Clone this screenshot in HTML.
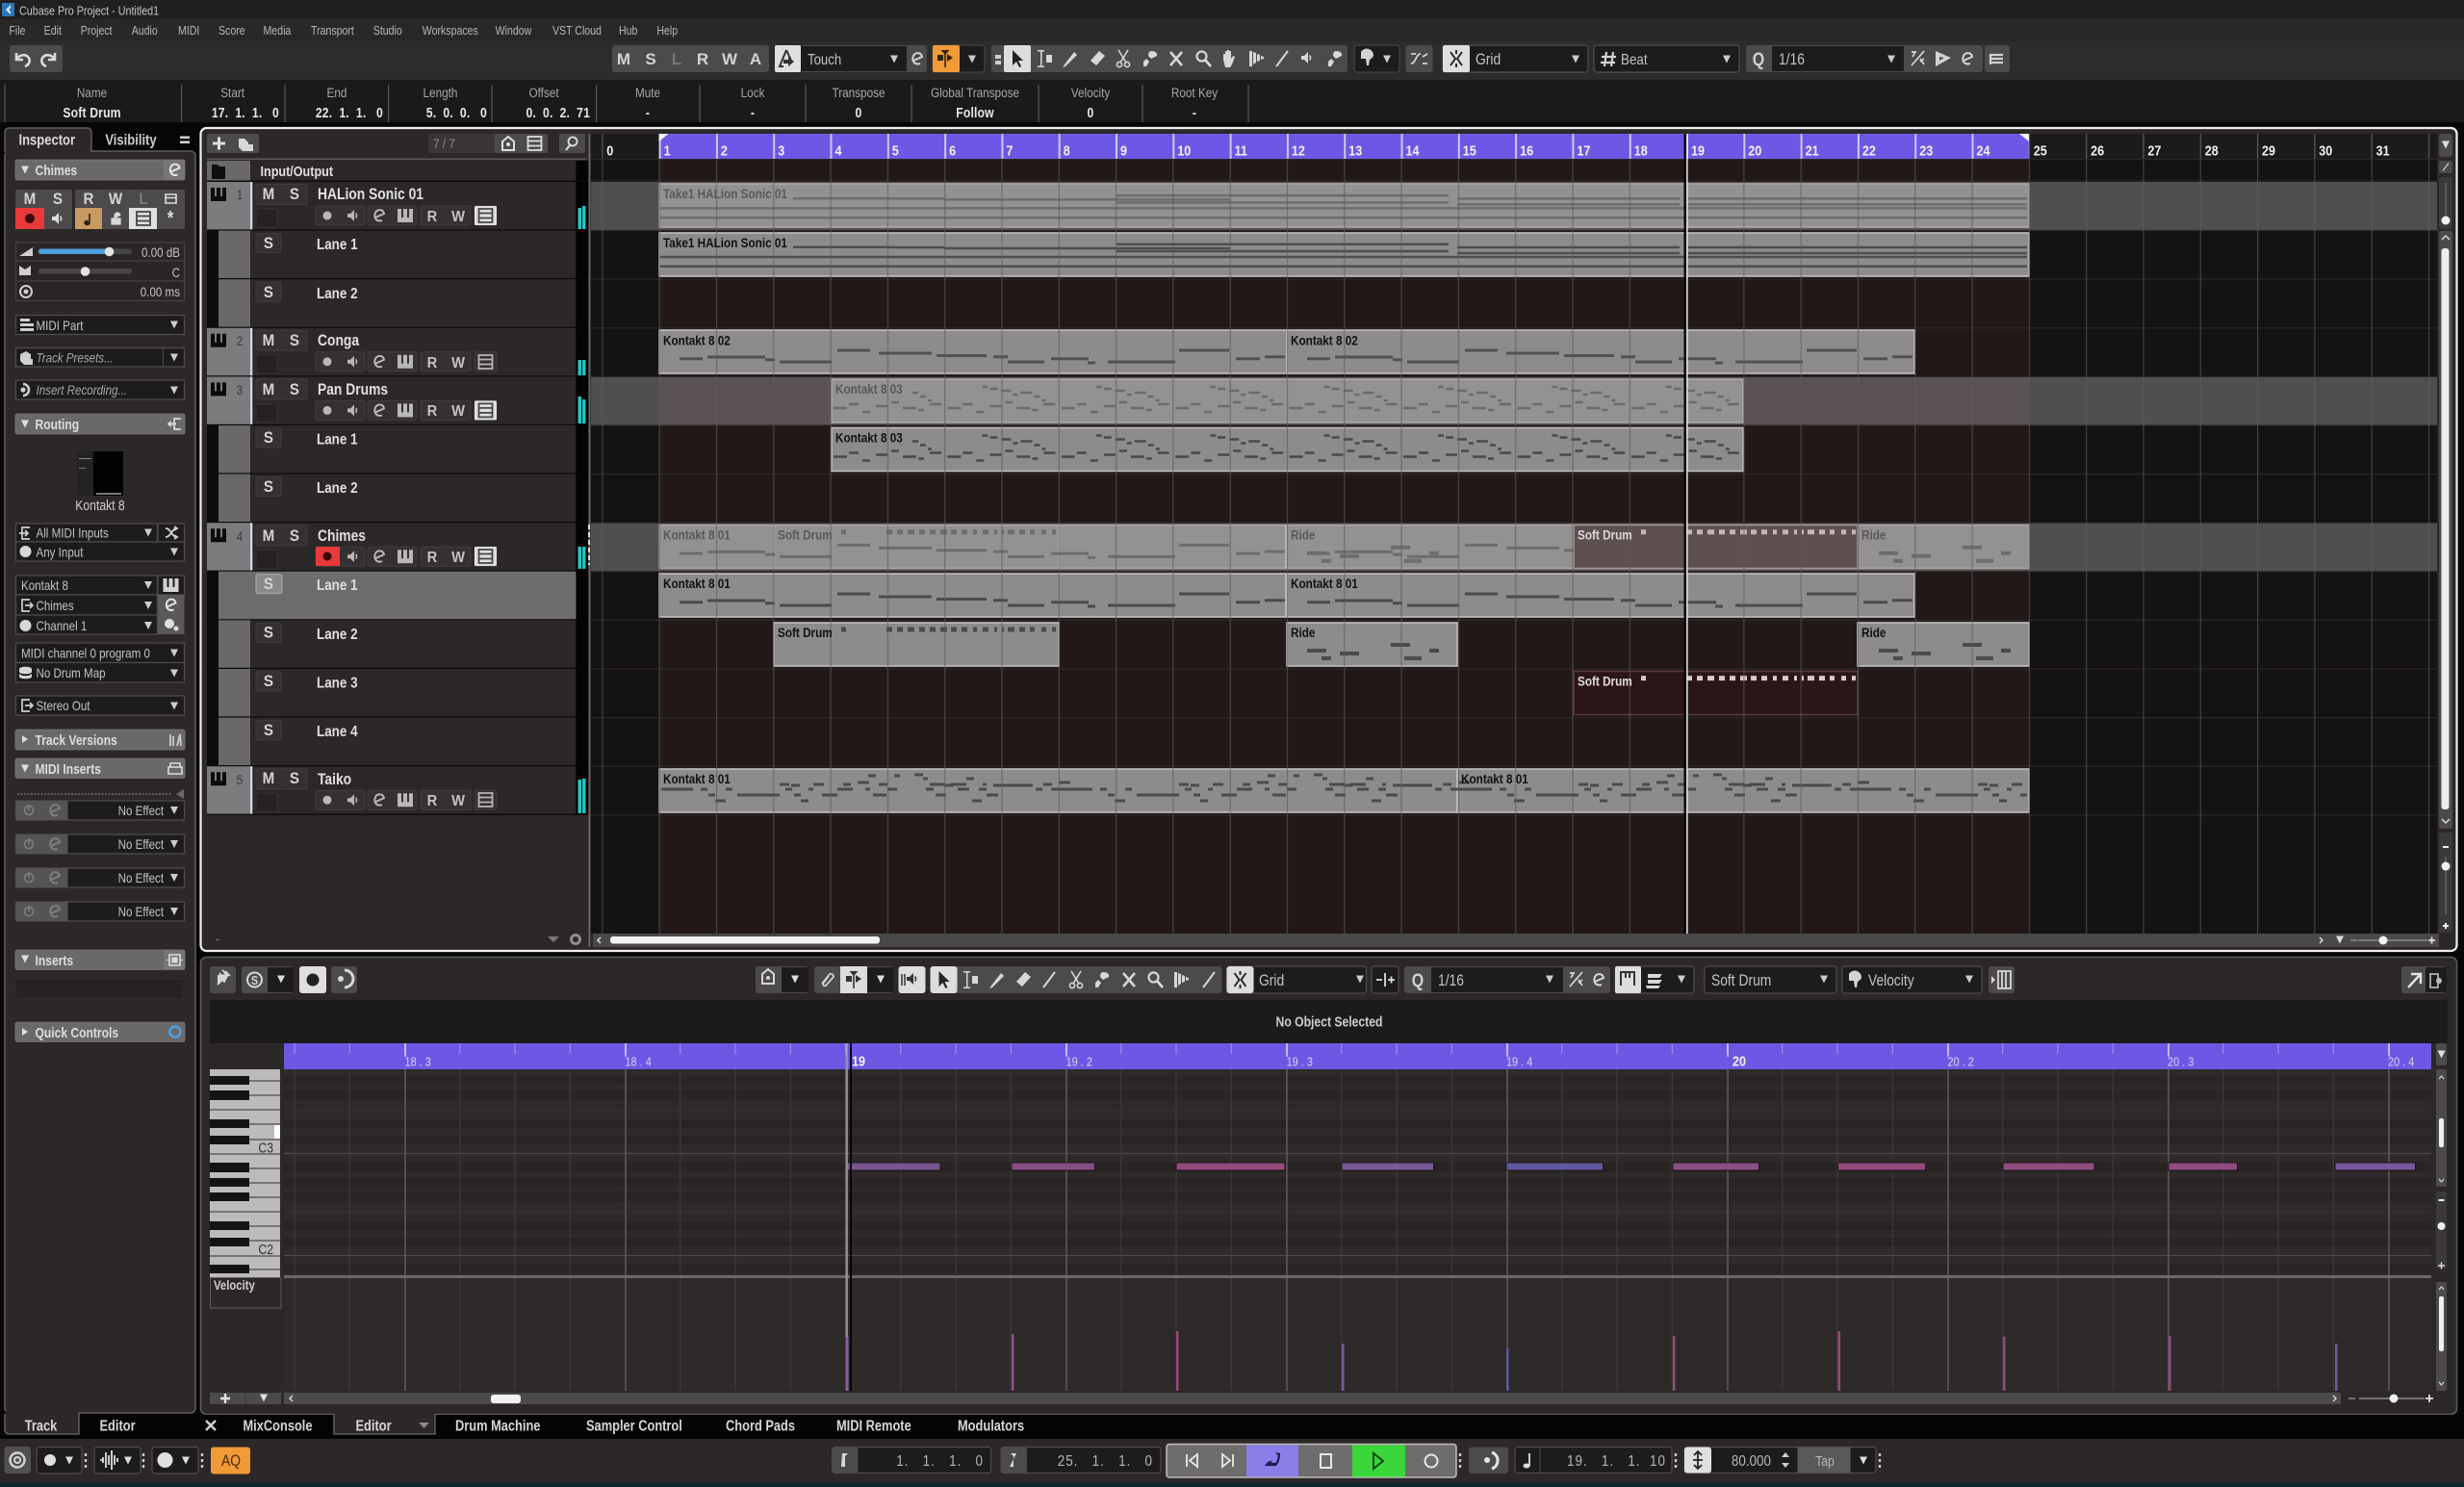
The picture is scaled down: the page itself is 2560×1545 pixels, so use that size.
<!DOCTYPE html>
<html><head><meta charset="utf-8"><title>Cubase Pro Project - Untitled1</title>
<style>
html,body{margin:0;padding:0;background:#080707;width:2560px;height:1545px;overflow:hidden}
svg{display:block}
text{font-family:"Liberation Sans",sans-serif;fill:#d4d2d2;font-size:13.5px;transform-box:fill-box;transform-origin:0 50%;transform:scaleX(.84);white-space:pre}
.c{text-anchor:middle;transform-origin:50% 50%}
.r{text-anchor:end;transform-origin:100% 50%}
.b{font-weight:700}
.bt{font-weight:700;font-size:16.5px;text-anchor:middle;transform-origin:50% 50%;transform:scaleX(.92)}
.bs{font-weight:700;font-size:16px;fill:#c4c2c2;text-anchor:middle;transform-origin:50% 50%;transform:scaleX(.92)}
.tl{font-weight:700;font-size:17px;text-anchor:middle;transform-origin:50% 50%;transform:scaleX(1)}
.m{font-size:12.6px;fill:#b8b6b6}
.l{fill:#a8a6a6;font-size:14px}
.v{font-weight:700;font-size:14.5px;fill:#e8e6e6;letter-spacing:.2px}
.tb{font-weight:700;font-size:15.5px;fill:#dcdada}
.n{font-weight:700;font-size:16.5px;fill:#e0dede}
.h{font-weight:700;font-size:14.4px;fill:#dedcdc}
.i{font-size:13.8px;fill:#c4c2c2}
.dt{font-size:16.5px;fill:#c4c2c2}
.e{font-weight:700;font-size:14px;fill:#111}
.ed{font-weight:700;font-size:14px;fill:#5a5858}
.bar{font-weight:700;font-size:15px;fill:#f2f2f2}
.beat{font-size:13px;fill:#d8d4f4}
.tab{font-weight:700;font-size:15.3px;fill:#d8d6d6}
.tr{font-size:16px;fill:#b8b6b6;letter-spacing:1.2px}
.dd{fill:#1e1b1b;stroke:#4e4c4c;stroke-width:1.2}
.g{fill:#4c4a4a}
.hd{fill:#6a6868;stroke:#7a7878;stroke-width:.8}
.ev{stroke:#c2c0c0;stroke-width:1.6;fill:#8d8b8b}
.et{stroke:#aaa8a8;stroke-width:1.6;fill:#939191}
</style></head><body>
<svg width="2560" height="1545" viewBox="0 0 2560 1545">
<defs>
<pattern id="pb" patternUnits="userSpaceOnUse" x="625.3" y="0" width="59.3" height="10"><rect width="1.2" height="10" fill="#5c5a5a"/></pattern>
<pattern id="pr" patternUnits="userSpaceOnUse" x="625.3" y="0" width="59.3" height="10"><rect width="2" height="10" fill="#cdc8f4"/></pattern>
<pattern id="pe" patternUnits="userSpaceOnUse" x="305.5" y="0" width="57.25" height="10"><rect width="1" height="10" fill="#403d3d"/></pattern>
<pattern id="pE" patternUnits="userSpaceOnUse" x="420.5" y="0" width="229" height="10"><rect width="1.2" height="10" fill="#625f5f"/></pattern>
<pattern id="pt" patternUnits="userSpaceOnUse" x="305.5" y="0" width="57.25" height="10"><rect width="1" height="10" fill="#a398ec"/></pattern>
<pattern id="pT" patternUnits="userSpaceOnUse" x="420.5" y="0" width="229" height="10"><rect width="1.2" height="10" fill="#e4e0fa"/></pattern>
<clipPath id="tk"><rect x="1514" y="798" width="592" height="46"/></clipPath>
<clipPath id="a1"><rect x="684" y="600" width="951" height="40"/></clipPath>
<clipPath id="a2"><rect x="684" y="600" width="299" height="40"/></clipPath>
<clipPath id="pc"><path d="M0 17h84v-17h200v50h-284z"/></clipPath>
<path id="tri" d="M-4-3.5h8l-4 8z"/>
<path id="keys" d="M-8-7h4v14h-4zM-2-7h4v14h-4zM4-7h4v14h-4zM-8 2h16v5h-16z"/>
<path id="e" fill="none" stroke-width="2" d="M-4 2L5-2C4-7-2-7-4-3C-6 2-3 7 3 5"/>
<path id="spk" stroke="none" d="M-6-2h3l4-4v12l-4-4h-3zM3-3a4 4 0 0 1 0 6l-1-1a3 3 0 0 0 0-4z"/>
<path id="list" fill="none" stroke-width="1.8" d="M-7-7h14v14h-14zM-7-2.5h14M-7 2.5h14"/>
<path id="t-i" stroke="none" d="M-7-9h7v1.5h-2.5v15h2.5v1.5h-7v-1.5h3v-15h-3zM2-4h6v8h-6z"/>
<path id="t-pen" stroke="none" d="M-6 6l-2 3 3-1L7-4 4-7z"/>
<path id="t-era" stroke="none" d="M-7 2L2-8l6 5-9 10z"/>
<g id="t-sci"><circle cx="-4" cy="6" r="2.6" fill="none" stroke-width="1.6"/><circle cx="4" cy="6" r="2.6" fill="none" stroke-width="1.6"/><path fill="none" stroke-width="1.6" d="M-3 4L5-9M3 4L-5-9"/></g>
<path id="t-glue" stroke="none" d="M1-8c4 0 7 2 6 5L1 0l-3-3c0-3 1-5 3-5zM-7 3l3-3 3 3-3 5h-3z"/>
<path id="t-x" fill="none" stroke-width="2.6" d="M-6-7L6 7M6-7L-6 7"/>
<g id="t-zoom"><circle cx="-1.5" cy="-2.5" r="5" fill="none" stroke-width="2.2"/><path fill="none" stroke-width="2.8" d="M2 1l6 7"/></g>
<path id="t-hand" stroke="none" d="M-6 1v-6h2v4-7h2v7-8h2v8-7h2v8l2-3 2 1-3 8-2 3h-5z"/>
<path id="t-mute" stroke="none" d="M-7-8h3v16h-3zM-3-7l3 1v10l-3 2zM1-5l3 1v6l-3 1zM5-3l3 1v2l-3 1z"/>
<path id="t-line" fill="none" stroke-width="2" d="M-6 8L6-8"/>
<path id="arrow" stroke="none" d="M-5-9V7l4-4 3 6 2-1-3-6h5z"/>
<path id="snap" stroke="none" d="M-4.500-8h9L0-3zM-.8-4h1.600v14h-1.600zM-8-3h6v6h-6zM2-4l6 4-6 4z"/>
<path id="grid" fill="none" stroke-width="1.9" d="M-6-7L-1 0-6 7M6-7L1 0 6 7M0-9v4M0 5v4"/>
<g id="trk">
<rect x="215" y="0" width="45" height="49.4" fill="#7d7b7b"/><rect x="260" y="0" width="2.4" height="49.4" fill="#c9dae8"/><rect x="262.400" y="0" width="336" height="49.4" fill="#2c2828"/><rect x="598.400" y="0" width="13" height="50" fill="#050404"/>
<rect x="266" y="2.500" width="53" height="21" rx="2" fill="#353131" stroke="#403d3d"/>
<rect x="266" y="28" width="22" height="19" fill="#262222" stroke="#353131"/>
<rect x="328" y="25" width="51" height="20" rx="2" fill="#353131" stroke="#403d3d"/><rect x="382" y="25" width="51" height="20" rx="2" fill="#353131" stroke="#403d3d"/><rect x="437" y="25" width="52" height="20" rx="2" fill="#353131" stroke="#403d3d"/><rect x="493" y="25" width="23" height="20" rx="2" fill="#353131" stroke="#403d3d"/>
<circle cx="340" cy="35" r="4.500" fill="#b8b6b6"/><use href="#spk" x="367" y="35" fill="#b8b6b6"/><use href="#e" x="394" y="35" stroke="#b8b6b6"/><use href="#keys" x="421" y="35" fill="#b8b6b6"/>
<use href="#keys" x="227" y="13" fill="#0d0c0c"/>
</g>
<g id="lane"><rect x="215" y="0" width="12" height="49.4" fill="#0d0c0c"/><rect x="227" y="0" width="33" height="49.4" fill="#6a6868"/><rect x="260" y="0" width="338.4" height="49.4" fill="#2c2828"/><rect x="598.400" y="0" width="13" height="50" fill="#050404"/><rect x="266" y="3" width="26" height="20" rx="2" fill="#353131" stroke="#403d3d"/></g>
<path id="k" fill="none" stroke-width="3" d="M706 625.700h24M735 624h60M795 626.700h10M810 629h54M870 617h34M913 620h55M973 622.500h52M1032 623.700h15M1047 629h38M1092 625.700h39M1130 630h8M1151 629h70M1225 617h52M1284 625.700h25M1314 623.700h21"/>
<path id="sd" fill="none" stroke-width="5" d="M874 654h5M921 654h6M932 654h6M943 654h7M955 654h6M966 654h6M977 654h7M988 654h6M999 654h6M1011 654h4M1021 654h6M1033 654h3M1041 654h2M1047 654h7M1059 654h6M1070 654h5M1082 654h5M1093 654h4"/>
<path id="rd" fill="none" stroke-width="4" d="M1358 676h20M1373 684h10M1392 679h20M1445 670h20M1459 684h18M1485 676h10"/>
<path id="hl" fill="none" stroke-width="2.500" d="M824 256.700h100M924 257h57M981 258h179M686 267h1420M686 276.700h1420M1160 253.700h345M1160 258h118M1160 261h345M1514 257h231M1514 263h231M1754 257h352M1754 263h352"/>
<path id="pd" fill="none" stroke-width="2.500" d="M38 8h6M46 10h8M58 12h10M70 16h5M78 14h12M92 18h6M100 22h4M2 30h14M18 26h10M32 34h8M46 28h12M62 24h8M74 30h14M90 32h6M102 26h12"/>
<path id="tko" fill="none" stroke-width="3" d="M687 820h33M728 820h7M736 826h7M743 832h11M754 820h7M766 826h44M810 815h10M816 820h7M822 816h9M825 826h7M832 832h8M840 820h5M845 815h11M854 826h16M870 820h16M876 815h8M891 813h12M902 806h8M899 820h5M907 826h14M913 815h9M922 820h10M929 806h6M950 805h9M959 809h5M966 815h16M962 820h8M972 826h11M981 816h9M988 815h16M995 820h12M1004 809h8M1010 832h10M1017 820h8M1021 815h4M1025 826h12M1032 816h41M1076 820h7M1084 815h9M1092 820h10M1100 813h12"/>
</defs>

<!-- title / menu / toolbar / info -->
<rect width="2560" height="20" fill="#1e2120"/>
<rect x="2" y="3" width="13" height="14" rx="1" fill="#2c78b8"/><path d="M11 5L6 10l5 5v-3L9 10l2-2z" fill="#e8f0f8"/>
<text x="20" y="15.500" style="font-size:12.800px;fill:#c4c4c4">Cubase Pro Project - Untitled1</text>
<rect y="20" width="2560" height="23" fill="#2a2727"/>
<rect y="43" width="2560" height="40" fill="#2e2b2b"/>
<rect y="83" width="2560" height="44" fill="#1b1919"/>
<text class="m" x="9.400" y="36">File</text><text class="m" x="45.700" y="36">Edit</text><text class="m" x="83.700" y="36">Project</text><text class="m" x="136.700" y="36">Audio</text><text class="m" x="185" y="36">MIDI</text><text class="m" x="227" y="36">Score</text><text class="m" x="273.500" y="36">Media</text><text class="m" x="323" y="36">Transport</text><text class="m" x="387.800" y="36">Studio</text><text class="m" x="438.800" y="36">Workspaces</text><text class="m" x="514.700" y="36">Window</text><text class="m" x="574" y="36">VST Cloud</text><text class="m" x="643" y="36">Hub</text><text class="m" x="682.400" y="36">Help</text>

<rect x="10" y="47" width="55" height="28" rx="3" class="g"/>
<path d="M17 55v7h7M18 61c2-4 8-5 11-2 3 3 2 8-3 10" fill="none" stroke="#dcdada" stroke-width="2.600"/>
<path d="M57 55v7h-7M56 61c-2-4-8-5-11-2-3 3-2 8 3 10" fill="none" stroke="#dcdada" stroke-width="2.600"/>

<rect x="636" y="47" width="163" height="28" rx="3" class="g"/>
<text class="tl" x="648" y="67">M</text><text class="tl" x="676" y="67">S</text><text class="tl" x="703" y="67" style="fill:#7a7878">L</text><text class="tl" x="730" y="67">R</text><text class="tl" x="758" y="67">W</text><text class="tl" x="785" y="67">A</text>
<rect x="805" y="47" width="158" height="28" rx="3" class="g"/><rect x="805" y="47" width="27" height="28" rx="2" fill="#e0dede"/><path d="M817 52l-7 17h4M817 52l6 13" fill="none" stroke="#333" stroke-width="2"/><path d="M814 62h5v-3l6 5-6 5v-3h-5z" fill="#333"/>
<rect x="832" y="48" width="110" height="26" fill="#1e1b1b"/><text class="dt" x="839" y="67" style="font-size:15.700px">Touch</text><use href="#tri" x="929" y="61" fill="#ccc"/><use href="#e" x="953" y="61" stroke="#d4d2d2"/>
<rect x="969" y="47" width="54" height="28" rx="3" fill="#1e1b1b" stroke="#4c4a4a"/><rect x="969" y="47" width="28" height="28" rx="2" fill="#f09a38"/><use href="#snap" x="982" y="60" fill="#332211"/><use href="#tri" x="1010" y="61" fill="#ccc"/>
<rect x="1030" y="47" width="370" height="28" rx="3" class="g"/><path d="M1034 57h6v4h-6zM1034 63h6v4h-6z" fill="#d0cece"/>
<rect x="1043" y="47" width="28" height="28" rx="2" fill="#dedcdc"/><use href="#arrow" x="1057" y="61" fill="#222"/>
<g fill="#d8d6d6" stroke="#d8d6d6"><use href="#t-i" x="1085" y="61"/><use href="#t-pen" x="1112" y="61"/><use href="#t-era" x="1140" y="61"/><use href="#t-sci" x="1167" y="61"/><use href="#t-glue" x="1195" y="61"/><use href="#t-x" x="1222" y="61"/><use href="#t-zoom" x="1250" y="61"/><use href="#t-hand" x="1277" y="61"/><use href="#t-mute" x="1305" y="61"/><use href="#t-line" x="1332" y="61"/><use href="#spk" x="1358" y="60"/><use href="#t-glue" x="1387" y="61"/></g>
<rect x="1407" y="47" width="47" height="28" rx="3" fill="#1e1b1b" stroke="#4c4a4a"/><path d="M1414 54a7 7 0 0 1 13 3c0 3-3 4-4 5l-1 6h-2l-1-7h-5z" fill="#d4d2d2"/><use href="#tri" x="1441" y="61" fill="#ccc"/>
<rect x="1460.500" y="47" width="28" height="28" rx="3" class="g"/><path d="M1466 66c5 0 5-10 10-10M1466 56h5M1478 66h5M1478 59l5-3" fill="none" stroke="#d4d2d2" stroke-width="1.800"/>
<rect x="1499" y="47" width="151" height="28" rx="3" class="dd"/><rect x="1499" y="47" width="28" height="28" rx="2" fill="#e0dede"/><use href="#grid" x="1513" y="61" stroke="#222"/><text class="dt" x="1533" y="67">Grid</text><use href="#tri" x="1637" y="61" fill="#ccc"/>
<rect x="1656" y="47" width="151" height="28" rx="3" class="dd"/><path d="M1669 54l-2 15M1676 54l-2 15M1664 59h15M1663 65h15" stroke="#d4d2d2" stroke-width="2.200"/><text class="dt" x="1684" y="67" style="font-size:16px">Beat</text><use href="#tri" x="1794" y="61" fill="#ccc"/>
<rect x="1814" y="47" width="246" height="28" rx="3" class="g"/><text class="c b" x="1827" y="68" style="font-size:19px">Q</text><rect x="1841" y="48" width="137" height="26" fill="#1e1b1b"/><text class="dt" x="1848" y="67">1/16</text><use href="#tri" x="1965" y="61" fill="#ccc"/>
<path d="M1986 68l13-15M1986 54h4l-3 5M1995 61l4 6M1999 61l-4 3" fill="none" stroke="#d8d6d6" stroke-width="1.700"/><path d="M2011 53v16l16-9zM2015 59l5 1-5 3z" fill="#d4d2d2" fill-rule="evenodd"/><use href="#e" x="2044" y="61" stroke="#d4d2d2"/>
<rect x="2062" y="47" width="26" height="28" rx="3" class="g"/><path d="M2068 56v11M2068 57h13M2068 61h13M2068 65h13" stroke="#d4d2d2" stroke-width="2.200"/>

<path d="M5 88v39M188.600 88v39M296 88v39M403.600 88v39M511 88v39M619.600 88v39M727 88v39M837 88v39M947 88v39M1079 88v39M1187 88v39M1297 88v39" stroke="#555353" stroke-width="1.300"/>
<text class="c l" x="95.500" y="101">Name</text><text class="c l" x="241.600" y="101">Start</text><text class="c l" x="350" y="101">End</text><text class="c l" x="457.500" y="101">Length</text><text class="c l" x="565" y="101">Offset</text><text class="c l" x="673" y="101">Mute</text><text class="c l" x="782" y="101">Lock</text><text class="c l" x="892" y="101">Transpose</text><text class="c l" x="1013" y="101">Global Transpose</text><text class="c l" x="1133" y="101">Velocity</text><text class="c l" x="1241" y="101">Root Key</text>
<text class="c v" x="95.500" y="122">Soft Drum</text><text class="r v" x="290" y="122">17.  1.  1.   0</text><text class="r v" x="398" y="122">22.  1.  1.   0</text><text class="r v" x="506" y="122">5.  0.  0.   0</text><text class="r v" x="613" y="122">0.  0.  2.  71</text><text class="c v" x="673" y="122">-</text><text class="c v" x="782" y="122">-</text><text class="c v" x="892" y="122">0</text><text class="c v" x="1013" y="122">Follow</text><text class="c v" x="1133" y="122">0</text><text class="c v" x="1241" y="122">-</text>

<!-- inspector -->
<rect x="5" y="157" width="198" height="1311" rx="5" fill="#2c2828" stroke="#5c5a5a" stroke-width="1.600"/>
<path d="M5 157v-19q0-5 5-5h80q5 0 5 5v19z" fill="#2c2828" stroke="#5c5a5a" stroke-width="1.500"/><rect x="6" y="155" width="88" height="5" fill="#2c2828"/>
<text class="tb" x="19.500" y="150.500">Inspector</text><text class="c tb" x="136" y="150.500" style="fill:#cfcdcd">Visibility</text><path d="M187 141.500h10v2.500h-10zM187 146.500h10v2.500h-10z" fill="#d4d2d2"/>
<rect x="16" y="166" width="176" height="21" rx="2" class="hd"/><rect x="170" y="166" width="22" height="21" fill="#777575"/><use href="#tri" x="26" y="176" fill="#ddd"/><text class="h" x="36.500" y="182">Chimes</text><use href="#e" x="181.500" y="176.500" stroke="#e4e4e4"/>
<rect x="16" y="197" width="59" height="41" rx="2" class="g"/><rect x="78" y="197" width="114" height="41" rx="2" class="g"/>
<rect x="16" y="216" width="30" height="22" fill="#e83a3a"/><circle cx="31" cy="227" r="5" fill="#3a0a0a"/><use href="#spk" x="60" y="227" fill="#ddd"/>
<rect x="78" y="216" width="28" height="22" fill="#c89a62"/><path d="M93 222v9M93 231a2.500 2 0 1 1-2-1.500" fill="#2a1e10" stroke="#2a1e10" stroke-width="1.600"/>
<path d="M116 232v-6h9v6zM119 226v-3a3 3 0 0 1 6 0" fill="#d8d8d8" stroke="#d8d8d8" stroke-width="1.200" transform="translate(0 1)"/>
<rect x="134" y="216" width="29" height="22" fill="#e0dede"/><use href="#list" x="149" y="227" stroke="#444"/><text class="c b" x="177" y="233" style="font-size:20px;fill:#ddd">*</text>
<text class="bt" x="31" y="212">M</text><text class="bt" x="60" y="212">S</text><text class="bt" x="92" y="212">R</text><text class="bt" x="120" y="212">W</text><text class="bt" x="149" y="212" style="fill:#7e7c7c">L</text><path d="M172 202h11v9h-11zM172 205.500h11" fill="none" stroke="#ddd" stroke-width="1.600"/>
<rect x="16.500" y="252" width="175" height="19" fill="#2a2626" stroke="#484646"/><rect x="16.500" y="271" width="175" height="21" fill="#2a2626" stroke="#484646"/><rect x="16.500" y="292" width="175" height="20.500" fill="#2a2626" stroke="#484646"/>
<path d="M20 266l14-9v9z" fill="#d0cece"/><rect x="40" y="258.500" width="97" height="5.500" rx="2.500" fill="#474545"/><rect x="40" y="258.500" width="74" height="5.500" rx="2.500" fill="#4f9fdc"/><circle cx="113.500" cy="261.500" r="4.800" fill="#e4e2e2"/>
<text class="r i" x="187" y="267">0.00 dB</text>
<path d="M20 276l6 4 6-4v10h-12z" fill="#d0cece"/><rect x="40" y="279" width="97" height="5.500" rx="2.500" fill="#474545"/><circle cx="88.500" cy="282" r="4.800" fill="#e4e2e2"/><text class="r i" x="187" y="288">C</text>
<circle cx="27" cy="303" r="6" fill="none" stroke="#d0cece" stroke-width="2"/><circle cx="27" cy="303" r="2.500" fill="#d0cece"/><text class="r i" x="187" y="308">0.00 ms</text>
<rect x="16.500" y="327.500" width="175" height="20" class="dd"/><path d="M21 331h10v3h-10zM21 336h14v3h-14zM21 341h14v3h-14z" fill="#d0cece"/><text class="i" x="37.500" y="343">MIDI Part</text><use href="#tri" x="181" y="337" fill="#ccc"/>
<rect x="16.500" y="361.500" width="175" height="19.500" class="dd"/><path d="M169.500 362v19" stroke="#4e4c4c"/><path d="M21 368l6-3 5 3v5h2v6h-9l-4-4z" fill="#d0cece"/><text class="i" x="37.500" y="376.500" style="font-style:italic;fill:#a8a6a6">Track Presets...</text><use href="#tri" x="181" y="371" fill="#ccc"/>
<rect x="16.500" y="395" width="175" height="20" class="dd"/><path d="M24 399a6 6 0 0 1 0 12" fill="none" stroke="#d0cece" stroke-width="2.600"/><circle cx="24" cy="405" r="2.600" fill="#d0cece"/><text class="i" x="37.500" y="410" style="font-style:italic;fill:#a8a6a6">Insert Recording...</text><use href="#tri" x="181" y="405" fill="#ccc"/>
<rect x="16" y="430" width="176" height="21" rx="2" class="hd"/><use href="#tri" x="26" y="440" fill="#ddd"/><text class="h" x="36.500" y="446">Routing</text><path d="M188 435h-7v11h7M176 440.500h7M178 438l-3 2.500 3 2.500" fill="none" stroke="#ddd" stroke-width="1.700"/>
<rect x="80" y="469" width="48" height="46" fill="#030303"/><rect x="80" y="469" width="17" height="46" fill="#232323"/><rect x="100" y="512" width="26" height="2" fill="#777"/><rect x="82" y="476" width="13" height="1" fill="#888"/><rect x="82" y="486" width="7" height="1" fill="#777"/>
<text class="c i" x="104" y="530" style="font-size:14.500px;fill:#d0cece">Kontakt 8</text>
<rect x="16.500" y="544" width="147" height="19" class="dd"/><rect x="16.500" y="563" width="175" height="20" class="dd"/><rect x="164" y="544" width="27.500" height="19" class="dd"/>
<path d="M31 548h-8v12h8M20 554h8M26 551l3 3-3 3" fill="none" stroke="#d0cece" stroke-width="1.700"/><text class="i" x="37.500" y="558.500">All MIDI Inputs</text><use href="#tri" x="154" y="553" fill="#ccc"/><path d="M172 549c6 0 6 9 12 9M172 558c6 0 6-9 12-9M181 547l3 2-3 2M181 556l3 2-3 2" fill="none" stroke="#d4d2d2" stroke-width="1.800"/>
<circle cx="26.500" cy="573" r="6" fill="#d8d6d6"/><text class="i" x="37.500" y="578.500">Any Input</text><use href="#tri" x="181" y="573" fill="#ccc"/>
<rect x="16.500" y="598" width="147" height="20" class="dd"/><rect x="16.500" y="618" width="147" height="21" class="dd"/><rect x="16.500" y="639" width="147" height="20" class="dd"/><rect x="164" y="598" width="27.500" height="20" class="dd"/><rect x="164" y="618" width="27.500" height="41" fill="#5a5858"/>
<text class="i" x="22" y="613">Kontakt 8</text><use href="#tri" x="154" y="607.500" fill="#ccc"/><use href="#keys" x="177.500" y="608" fill="#d4d2d2"/>
<path d="M31 623h-8v12h8M26 629h8M31 626l3 3-3 3" fill="none" stroke="#d0cece" stroke-width="1.700"/><text class="i" x="37.500" y="634">Chimes</text><use href="#tri" x="154" y="628.500" fill="#ccc"/><use href="#e" x="177.500" y="628.500" stroke="#e4e4e4"/>
<circle cx="26.500" cy="650" r="6" fill="#d8d6d6"/><text class="i" x="37.500" y="655">Channel 1</text><use href="#tri" x="154" y="649.500" fill="#ccc"/><circle cx="176" cy="648" r="5" fill="#e0dede"/><circle cx="183" cy="653" r="2.500" fill="#e0dede"/>
<rect x="16.500" y="668" width="175" height="20.500" class="dd"/><rect x="16.500" y="688.500" width="175" height="20.500" class="dd"/>
<text class="i" x="22" y="683.500">MIDI channel 0 program 0</text><use href="#tri" x="181" y="678" fill="#ccc"/><path d="M20 695c0-3 13-3 13 0v3c0 3-13 3-13 0zM20 700c3 3 10 3 13 0v3c0 3-13 3-13 0z" fill="#d8d6d6"/><text class="i" x="37.500" y="704">No Drum Map</text><use href="#tri" x="181" y="699" fill="#ccc"/>
<rect x="16.500" y="723" width="175" height="20" class="dd"/><path d="M31 727h-8v12h8M26 733h8M31 730l3 3-3 3" fill="none" stroke="#d0cece" stroke-width="1.700"/><text class="i" x="37.500" y="738">Stereo Out</text><use href="#tri" x="181" y="733" fill="#ccc"/>
<rect x="16" y="758" width="176" height="21" rx="2" class="hd"/><path d="M23 764v8l6-4z" fill="#ddd"/><text class="h" x="36.500" y="774">Track Versions</text><path d="M177 763v12M180 765v10M184 775l3-12 1 12" fill="none" stroke="#ccc" stroke-width="1.800"/>
<rect x="16" y="788" width="176" height="20.500" rx="2" class="hd"/><use href="#tri" x="26" y="798" fill="#ddd"/><text class="h" x="36.500" y="804">MIDI Inserts</text><path d="M177 793h10v4h-10zM175 797h14v7h-14z" fill="none" stroke="#ddd" stroke-width="1.600"/>
<path d="M18 825h160" stroke="#5e5c5c" stroke-width="2" stroke-dasharray="2 1.500"/><path d="M183 825l8-5v10z" fill="#6a6868"/>
<g id="fx1"><rect x="16.500" y="832" width="175" height="20" rx="1" class="dd"/><rect x="16.500" y="832" width="54" height="20" fill="#555353"/><circle cx="30" cy="842" r="4.500" fill="none" stroke="#7f7d7d" stroke-width="1.600"/><path d="M30 836v6" stroke="#7f7d7d" stroke-width="1.600"/><use href="#e" x="57" y="842" stroke="#7f7d7d"/><use href="#tri" x="181" y="841.500" fill="#ccc"/></g>
<text class="r i" x="170" y="847">No Effect</text>
<use href="#fx1" y="35"/><text class="r i" x="170" y="882">No Effect</text>
<use href="#fx1" y="70"/><text class="r i" x="170" y="917">No Effect</text>
<use href="#fx1" y="105"/><text class="r i" x="170" y="952">No Effect</text>
<rect x="16" y="987" width="176" height="20.500" rx="2" class="hd"/><rect x="170" y="987" width="22" height="20.500" fill="#777575"/><use href="#tri" x="26" y="996" fill="#ddd"/><text class="h" x="36.500" y="1003">Inserts</text><path d="M176 992h11v11h-11z" fill="none" stroke="#ddd" stroke-width="1.600"/><path d="M179 995h5v5h-5zM173 997.500h3M187 997.500h3" fill="#ddd" stroke="#ddd"/>
<rect x="16" y="1017" width="175" height="20.500" rx="1" fill="#262222" stroke="#322e2e"/>
<rect x="16" y="1062" width="176" height="20.500" rx="2" class="hd"/><path d="M23 1068v8l6-4z" fill="#ddd"/><text class="h" x="36.500" y="1078">Quick Controls</text><circle cx="182" cy="1072" r="5.500" fill="none" stroke="#4ea0e4" stroke-width="2.400"/>

<!-- project zone -->
<rect x="208.500" y="133" width="2344" height="855" rx="6" fill="#2c2828"/>
<rect x="215" y="139" width="54" height="20" rx="2" class="g"/><path d="M221 149h13M227.500 142.500v13" stroke="#e0dede" stroke-width="3"/><path d="M248 144h6l4 4v2h5v7h-11l-4-4z" fill="#d8d6d6"/>
<rect x="445" y="139" width="124" height="20" rx="2" fill="#3a3636"/><text x="450" y="154" style="fill:#8a8888;font-size:14px">7 / 7</text><rect x="514" y="139" width="55" height="20" rx="2" class="g"/><path d="M522 147l6-5 6 5v9h-12z" fill="none" stroke="#e0dede" stroke-width="2"/><circle cx="528" cy="150" r="2" fill="#e0dede"/><use href="#list" x="555.500" y="149" stroke="#e0dede"/><rect x="581" y="139" width="27" height="20" rx="2" class="g"/><circle cx="595" cy="147" r="4.500" fill="none" stroke="#e0dede" stroke-width="1.800"/><path d="M592 151l-4 5" stroke="#e0dede" stroke-width="2"/>
<rect x="215" y="164.500" width="394" height="1.500" fill="#5a5858"/>
<rect x="215" y="167" width="45" height="20.500" fill="#6a6868"/><rect x="260" y="167" width="338.400" height="20.500" fill="#2c2828"/><rect x="598.400" y="167" width="13" height="22" fill="#050404"/>
<path d="M220 171h6l2 2h6v13h-14z" fill="#0f0e0e"/><text class="b" x="270.500" y="183" style="font-size:15px;fill:#e0dede">Input/Output</text>
<rect x="215" y="187.500" width="396" height="1.500" fill="#0c0b0b"/>

<!-- rows -->
<rect x="215" y="189" width="396" height="658" fill="#0b0a0a"/>
<g transform="translate(0 189)"><use href="#trk"/></g><rect x="493" y="214" width="23" height="20" rx="1" fill="#e0dede"/><use href="#list" x="504.500" y="224" stroke="#444"/>
<text x="249" y="207" class="c" style="fill:#3a3838;font-size:14px">1</text><text class="bt" x="279" y="207">M</text><text class="bt" x="306" y="207">S</text><text class="n" x="330" y="207">HALion Sonic 01</text><text class="bs" x="449" y="230">R</text><text class="bs" x="476" y="230">W</text>
<g transform="translate(0 239.600)"><use href="#lane"/></g><text class="bt" x="279" y="258">S</text><text class="n" x="329" y="259" style="font-size:16px">Lane 1</text>
<g transform="translate(0 290.200)"><use href="#lane"/></g><text class="bt" x="279" y="309">S</text><text class="n" x="329" y="310" style="font-size:16px">Lane 2</text>
<g transform="translate(0 340.800)"><use href="#trk"/></g><use href="#list" x="504.500" y="376" stroke="#b8b6b6"/>
<text x="249" y="359" class="c" style="fill:#3a3838;font-size:14px">2</text><text class="bt" x="279" y="359">M</text><text class="bt" x="306" y="359">S</text><text class="n" x="330" y="359">Conga</text><text class="bs" x="449" y="382">R</text><text class="bs" x="476" y="382">W</text>
<g transform="translate(0 391.400)"><use href="#trk"/></g><rect x="493" y="416.400" width="23" height="20" rx="1" fill="#e0dede"/><use href="#list" x="504.500" y="426.400" stroke="#444"/>
<text x="249" y="410" class="c" style="fill:#3a3838;font-size:14px">3</text><text class="bt" x="279" y="410">M</text><text class="bt" x="306" y="410">S</text><text class="n" x="330" y="410">Pan Drums</text><text class="bs" x="449" y="432">R</text><text class="bs" x="476" y="432">W</text>
<g transform="translate(0 442)"><use href="#lane"/></g><text class="bt" x="279" y="460">S</text><text class="n" x="329" y="461.500" style="font-size:16px">Lane 1</text>
<g transform="translate(0 492.600)"><use href="#lane"/></g><text class="bt" x="279" y="511">S</text><text class="n" x="329" y="512" style="font-size:16px">Lane 2</text>
<g transform="translate(0 543.200)"><use href="#trk"/></g><rect x="328" y="568" width="25" height="20" rx="1" fill="#e83a3a"/><circle cx="340" cy="578" r="4.500" fill="#3a0a0a"/><rect x="493" y="568" width="23" height="20" rx="1" fill="#e0dede"/><use href="#list" x="504.500" y="578" stroke="#444"/>
<text x="249" y="562" class="c" style="fill:#3a3838;font-size:14px">4</text><text class="bt" x="279" y="562">M</text><text class="bt" x="306" y="562">S</text><text class="n" x="330" y="562">Chimes</text><text class="bs" x="449" y="584">R</text><text class="bs" x="476" y="584">W</text>
<g transform="translate(0 593.800)"><use href="#lane"/></g><rect x="227" y="593.800" width="371.400" height="49.400" fill="#6e6c6c"/><rect x="266" y="596.800" width="27" height="20" rx="2" fill="#8a8888" stroke="#aaa8a8"/><text class="bt" x="279" y="612">S</text><text class="n" x="329" y="613" style="font-size:16px">Lane 1</text>
<g transform="translate(0 644.400)"><use href="#lane"/></g><text class="bt" x="279" y="662.500">S</text><text class="n" x="329" y="664" style="font-size:16px">Lane 2</text>
<g transform="translate(0 695)"><use href="#lane"/></g><text class="bt" x="279" y="713">S</text><text class="n" x="329" y="714.500" style="font-size:16px">Lane 3</text>
<g transform="translate(0 745.600)"><use href="#lane"/></g><text class="bt" x="279" y="764">S</text><text class="n" x="329" y="765" style="font-size:16px">Lane 4</text>
<g transform="translate(0 796.200)"><use href="#trk"/></g><use href="#list" x="504.500" y="831" stroke="#b8b6b6"/>
<text x="249" y="815" class="c" style="fill:#3a3838;font-size:14px">5</text><text class="bt" x="279" y="814">M</text><text class="bt" x="306" y="814">S</text><text class="n" x="330" y="815">Taiko</text><text class="bs" x="449" y="837">R</text><text class="bs" x="476" y="837">W</text>
<!-- meters -->
<path d="M600.500 216h3.500v22h-3.500zM605 214h3.500v24h-3.500zM600.500 374h3.500v16h-3.500zM605 374h3.500v16h-3.500zM600.500 412h3.500v28h-3.500zM605 415h3.500v25h-3.500zM600.500 568h3.500v23h-3.500zM605 568h3.500v23h-3.500zM600.500 810h3.500v35h-3.500zM605 809h3.500v36h-3.500z" fill="#22c4c8"/>
<text class="c" x="226" y="980" style="fill:#8a8888">-</text><path d="M569 973h12l-6 6z" fill="#7a7878"/><circle cx="598" cy="976" r="4.500" fill="none" stroke="#8f8d8d" stroke-width="3"/>
<rect x="611.500" y="139" width="1.800" height="845" fill="#6a6868"/>
<path d="M612 545v42" stroke="#ddd" stroke-width="2" stroke-dasharray="5 3"/>

<!-- event display bg -->
<rect x="614" y="139" width="1918" height="26" fill="#1c1a1a"/>
<rect x="614" y="166" width="1918" height="804" fill="#141212"/>
<rect x="684.600" y="166" width="1423.400" height="804" fill="#221818"/>
<rect x="614" y="189" width="1918" height="50" fill="#fff" opacity=".26"/><rect x="614" y="391.400" width="1918" height="50.600" fill="#fff" opacity=".26"/><rect x="614" y="543.200" width="1918" height="50.600" fill="#fff" opacity=".26"/>
<path d="M614 187.800h1918M614 239.500h1918M614 290.200h1918M614 340.800h1918M614 391.400h1918M614 442h1918M614 492.600h1918M614 543.200h1918M614 593.800h1918M614 644.400h1918M614 695h1918M614 745.600h1918M614 796.200h1918M614 846.800h1918" stroke="#2b2727" stroke-width="1.200"/>

<!-- ruler -->
<rect x="684.600" y="139" width="1423.400" height="26" fill="#6c58e4"/>
<rect x="625.300" y="139" width="1900" height="26" fill="url(#pb)"/><rect x="684" y="139" width="1424" height="26" fill="url(#pr)"/>
<path d="M684.600 139h10l-10 8zM2108 139h-10l10 8z" fill="#f4f4f4"/>
<text class="bar" x="630.300" y="161.500">0</text><text class="bar" x="689.600" y="161.500">1</text><text class="bar" x="748.900" y="161.500">2</text><text class="bar" x="808.200" y="161.500">3</text><text class="bar" x="867.500" y="161.500">4</text><text class="bar" x="926.800" y="161.500">5</text><text class="bar" x="986.100" y="161.500">6</text><text class="bar" x="1045.400" y="161.500">7</text><text class="bar" x="1104.700" y="161.500">8</text><text class="bar" x="1164" y="161.500">9</text><text class="bar" x="1223.300" y="161.500">10</text><text class="bar" x="1282.600" y="161.500">11</text><text class="bar" x="1341.900" y="161.500">12</text><text class="bar" x="1401.200" y="161.500">13</text><text class="bar" x="1460.500" y="161.500">14</text><text class="bar" x="1519.800" y="161.500">15</text><text class="bar" x="1579.100" y="161.500">16</text><text class="bar" x="1638.400" y="161.500">17</text><text class="bar" x="1697.700" y="161.500">18</text><text class="bar" x="1757" y="161.500">19</text><text class="bar" x="1816.300" y="161.500">20</text><text class="bar" x="1875.600" y="161.500">21</text><text class="bar" x="1934.900" y="161.500">22</text><text class="bar" x="1994.200" y="161.500">23</text><text class="bar" x="2053.500" y="161.500">24</text><text class="bar" x="2112.800" y="161.500">25</text><text class="bar" x="2172.100" y="161.500">26</text><text class="bar" x="2231.400" y="161.500">27</text><text class="bar" x="2290.700" y="161.500">28</text><text class="bar" x="2350" y="161.500">29</text><text class="bar" x="2409.300" y="161.500">30</text><text class="bar" x="2468.600" y="161.500">31</text>

<!-- events -->
<rect class="et" x="685" y="191" width="1423" height="45"/>
<rect class="ev" x="685" y="242" width="1423" height="45"/>
<rect class="ev" x="685" y="343" width="652" height="45"/><rect class="ev" x="1337" y="343" width="652" height="45"/>
<rect class="et" x="864" y="394" width="947" height="45"/>
<rect class="ev" x="864" y="444.500" width="947" height="45"/>
<rect class="et" x="685" y="545.500" width="1423" height="45"/><path d="M804 545v46M1100 545v46M1336 545v46M1930 545v46" stroke="#c2c0c0" stroke-width="1.500"/>
<rect x="1635" y="545.500" width="295" height="45" fill="#5e4f51" stroke="#a49898" stroke-width="1.500"/>
<rect class="ev" x="685" y="596" width="651" height="45"/><rect class="ev" x="1337" y="596" width="652" height="45"/>
<rect class="ev" x="804" y="647" width="296" height="45"/><rect class="ev" x="1337" y="647" width="177" height="45"/><rect class="ev" x="1930" y="647" width="178" height="45"/>
<rect x="1635" y="697.500" width="295" height="45" fill="#2c1519" stroke="#5a3a40" stroke-width="1.500"/>
<rect class="ev" x="685" y="799" width="829" height="45"/><rect class="ev" x="1514" y="799" width="594" height="45"/>

<!-- notes -->
<use href="#hl" transform="translate(0 -50.600)" stroke="#6e6c6c"/><use href="#hl" stroke="#4e4c4c"/>
<g stroke="#525050"><use href="#k" transform="translate(0 -253)"/><use href="#k" transform="translate(652 -253)"/></g>
<g stroke="#6c6a6a"><use href="#pd" transform="translate(864 394)" clip-path="url(#pc)"/><use href="#pd" transform="translate(982.400 394)"/><use href="#pd" transform="translate(1100.800 394)"/><use href="#pd" transform="translate(1219.200 394)"/><use href="#pd" transform="translate(1337.600 394)"/><use href="#pd" transform="translate(1456 394)"/><use href="#pd" transform="translate(1574.400 394)"/><use href="#pd" transform="translate(1692.800 394)"/></g>
<g stroke="#4a4848"><use href="#pd" transform="translate(864 444.500)" clip-path="url(#pc)"/><use href="#pd" transform="translate(982.400 444.500)"/><use href="#pd" transform="translate(1100.800 444.500)"/><use href="#pd" transform="translate(1219.200 444.500)"/><use href="#pd" transform="translate(1337.600 444.500)"/><use href="#pd" transform="translate(1456 444.500)"/><use href="#pd" transform="translate(1574.400 444.500)"/><use href="#pd" transform="translate(1692.800 444.500)"/></g>
<g stroke="#6e6c6c"><use href="#k" transform="translate(0 -50.600)" clip-path="url(#a1)"/><use href="#k" transform="translate(652 -50.600)" clip-path="url(#a2)"/><use href="#sd" transform="translate(0 -101.200)"/><use href="#rd" transform="translate(0 -101.200)"/><use href="#rd" transform="translate(594 -101.200)"/></g>
<g stroke="#4c4a4a"><use href="#k"/><use href="#k" transform="translate(652 0)"/><use href="#sd"/><use href="#rd"/><use href="#rd" transform="translate(594 0)"/></g>
<use href="#sd" transform="translate(831 50.600)" stroke="#d8c8c8"/><use href="#sd" transform="translate(831 -101.200)" stroke="#c4b4b4"/>
<g stroke="#4c4a4a"><use href="#tko"/><use href="#tko" transform="translate(415 0)"/><g clip-path="url(#tk)"><use href="#tko" transform="translate(830 0)"/><use href="#tko" transform="translate(1245 0)"/></g></g>

<rect x="625.300" y="166" width="1906" height="804" fill="url(#pb)" opacity=".65"/>

<!-- event names -->
<text class="ed" x="689" y="206">Take1 HALion Sonic 01</text><text class="e" x="689" y="257">Take1 HALion Sonic 01</text>
<text class="e" x="689" y="358.500">Kontakt 8 02</text><text class="e" x="1341" y="358.500">Kontakt 8 02</text>
<text class="ed" x="868" y="409">Kontakt 8 03</text><text class="e" x="868" y="459.500">Kontakt 8 03</text>
<text class="ed" x="689" y="560.500">Kontakt 8 01</text><text class="ed" x="808" y="560.500">Soft Drum</text><text class="ed" x="1341" y="560.500">Ride</text><text class="b" x="1639" y="560.500" style="font-size:14px;fill:#dcd8d8">Soft Drum</text><text class="ed" x="1934" y="560.500">Ride</text>
<text class="e" x="689" y="611">Kontakt 8 01</text><text class="e" x="1341" y="611">Kontakt 8 01</text>
<text class="e" x="808" y="662">Soft Drum</text><text class="e" x="1341" y="662">Ride</text><text class="e" x="1934" y="662">Ride</text>
<text class="b" x="1639" y="712.500" style="font-size:14px;fill:#e0dcdc">Soft Drum</text>
<text class="e" x="689" y="814">Kontakt 8 01</text><text class="e" x="1518" y="814">Kontakt 8 01</text>

<!-- playhead -->
<rect x="1749.500" y="139" width="2.600" height="831" fill="#050505"/><rect x="1752.100" y="139" width="1.500" height="831" fill="#e8e8e8"/>

<!-- project right column & scrollbars -->
<rect x="2533" y="139" width="16" height="845" fill="#2c2828"/>
<rect x="2534" y="139" width="14" height="24" rx="3" class="g"/><use href="#tri" x="2541" y="150" fill="#ddd"/>
<rect x="2534" y="167" width="14" height="13" rx="2" class="g"/><use href="#t-line" transform="translate(2541 173.500) scale(.5)" stroke="#eee"/>
<rect x="2534" y="184" width="14" height="54" rx="2" fill="#3c3939"/><rect x="2540" y="190" width="2" height="42" fill="#5a5858"/><circle cx="2541" cy="229" r="4.500" fill="#f0f0f0"/>
<rect x="2534" y="240" width="14" height="621" rx="2" class="g"/><path d="M2537 249l4-4 4 4" fill="none" stroke="#ddd" stroke-width="1.400"/><rect x="2536.500" y="258" width="8" height="583" rx="3" fill="#eeecec"/><path d="M2537 851l4 4 4-4" fill="none" stroke="#ddd" stroke-width="1.400"/>
<rect x="2534" y="865" width="14" height="104" rx="2" fill="#3c3939"/><path d="M2538 880h6" stroke="#eee" stroke-width="2"/><rect x="2540" y="890" width="2" height="60" fill="#5a5858"/><circle cx="2541" cy="900" r="4.500" fill="#f0f0f0"/><path d="M2538 962h6M2541 959v6" stroke="#eee" stroke-width="2"/>
<rect x="616" y="970" width="1918" height="14" fill="#4a4848"/><rect x="634" y="973" width="280" height="7.500" rx="3" fill="#f2f0f0"/>
<path d="M624 974l-3 3 3 3M2410 974l3 3-3 3" fill="none" stroke="#ddd" stroke-width="1.500"/><use href="#tri" x="2431" y="976" fill="#ddd"/><path d="M2442 977h7M2450 977h72" stroke="#888" stroke-width="1.500"/><circle cx="2476" cy="977" r="4.500" fill="#f0f0f0"/><path d="M2523 977h7M2526.500 973.500v7" stroke="#ddd" stroke-width="1.800"/>
<rect x="208.500" y="133" width="2344" height="855" rx="6" fill="none" stroke="#f0eeee" stroke-width="2.200"/>

<!-- editor zone -->
<rect x="208.500" y="994.500" width="2344" height="475" rx="6" fill="#2c2828" stroke="#5c5a5a" stroke-width="1.600"/>
<rect x="218" y="1039" width="2325" height="45" fill="#1c1a1a"/>
<text class="c b" x="1381" y="1066.500" style="font-size:14.500px;fill:#d0cece">No Object Selected</text>
<rect x="218" y="1004" width="27" height="28" rx="3" class="g"/><path d="M228 1011l6 6M231 1008l6 6M226 1014l9-1 1 1-3 6-2-2-5 5M234 1009l5 5" fill="#d8d6d6" stroke="#d8d6d6" stroke-width="1.800"/>
<rect x="251" y="1004" width="54" height="28" rx="3" class="g"/><rect x="278" y="1005" width="27" height="26" fill="#1e1b1b"/><circle cx="264.500" cy="1018" r="7.500" fill="none" stroke="#d8d6d6" stroke-width="2"/><text class="c b" x="264.500" y="1023" style="font-size:13px">S</text><use href="#tri" x="292" y="1017" fill="#ddd"/>
<rect x="311" y="1004" width="28" height="28" rx="3" fill="#e0dede"/><circle cx="325" cy="1018" r="6.500" fill="#222"/>
<rect x="344" y="1004" width="27" height="28" rx="3" class="g"/><path d="M358 1008a9 9 0 0 1 0 18" fill="none" stroke="#d8d6d6" stroke-width="3"/><circle cx="354" cy="1017" r="3" fill="#d8d6d6"/>
<rect x="785" y="1004" width="55" height="28" rx="3" class="g"/><rect x="812" y="1005" width="28" height="26" fill="#1e1b1b"/><path d="M792 1012l6-5 6 5v10h-12z" fill="none" stroke="#d8d6d6" stroke-width="2"/><circle cx="798" cy="1016" r="2" fill="#d8d6d6"/><use href="#tri" x="826" y="1017" fill="#ddd"/>
<rect x="846" y="1004" width="82" height="28" rx="3" class="g"/><path d="M854 1022l8-10a3 3 0 0 1 4 3l-8 9a2 2 0 0 1-3-2l6-8" fill="none" stroke="#d8d6d6" stroke-width="1.700"/><rect x="873" y="1004" width="28" height="28" fill="#dedcdc"/><use href="#snap" x="887" y="1017" fill="#333"/><rect x="901" y="1005" width="27" height="26" fill="#1e1b1b"/><use href="#tri" x="915" y="1017" fill="#ddd"/>
<rect x="933.500" y="1004" width="28" height="28" rx="3" fill="#dedcdc"/><use href="#spk" x="948" y="1017" fill="#333"/><path d="M937 1012v12M940 1012v12" stroke="#333" stroke-width="1.500"/>
<rect x="966.500" y="1004" width="303" height="28" rx="3" class="g"/><rect x="966.500" y="1004" width="28" height="28" rx="3" fill="#dedcdc"/><use href="#arrow" x="980.500" y="1018" fill="#222"/>
<g fill="#d8d6d6" stroke="#d8d6d6"><use href="#t-i" x="1008" y="1018"/><use href="#t-pen" x="1036" y="1018"/><use href="#t-era" x="1063" y="1018"/><use href="#t-line" x="1090" y="1018"/><use href="#t-sci" x="1118" y="1018"/><use href="#t-glue" x="1145" y="1018"/><use href="#t-x" x="1173" y="1018"/><use href="#t-zoom" x="1200" y="1018"/><use href="#t-mute" x="1227" y="1018"/><use href="#t-line" x="1256" y="1018"/></g>
<rect x="1274.500" y="1004" width="145" height="28" rx="3" class="dd"/><rect x="1274.500" y="1004" width="28" height="28" rx="3" fill="#dedcdc"/><use href="#grid" x="1288.500" y="1018" stroke="#222"/><text class="dt" x="1308" y="1024">Grid</text><use href="#tri" x="1413" y="1017" fill="#ccc"/>
<rect x="1425" y="1004" width="28" height="28" rx="3" class="dd"/><path d="M1430 1018h6M1439 1011v14M1442 1018h7M1445.500 1014.500v7" stroke="#ddd" stroke-width="1.800"/>
<rect x="1459" y="1004" width="214" height="28" rx="3" class="g"/><text class="c b" x="1473" y="1025" style="font-size:19px">Q</text><rect x="1487" y="1005" width="137" height="26" fill="#1e1b1b"/><text class="dt" x="1494" y="1024">1/16</text><use href="#tri" x="1610" y="1017" fill="#ccc"/><path d="M1631 1025l13-15M1631 1011h4l-3 5M1640 1018l4 6M1644 1018l-4 3" fill="none" stroke="#d8d6d6" stroke-width="1.700"/><use href="#e" x="1661" y="1018" stroke="#d8d6d6"/>
<rect x="1678" y="1004" width="82" height="28" rx="3" class="dd"/><rect x="1678" y="1004" width="27" height="28" rx="2" fill="#dedcdc"/><path d="M1684 1024v-14h14v14M1689 1010v6M1693 1010v6" fill="none" stroke="#333" stroke-width="2"/><path d="M1712 1012h15l-3 4h-12zM1712 1018h15l-3 4h-12zM1710 1024h15l-2 3h-12z" fill="#d8d6d6"/><use href="#tri" x="1747" y="1017" fill="#ccc"/>
<rect x="1771" y="1004" width="137" height="28" rx="3" class="dd"/><text class="dt" x="1778" y="1024">Soft Drum</text><use href="#tri" x="1895" y="1017" fill="#ccc"/>
<rect x="1914" y="1004" width="145" height="28" rx="3" class="dd"/><path d="M1921 1012a7 7 0 0 1 13 3c0 3-3 4-4 5l-1 6h-2l-1-7h-5z" fill="#d4d2d2"/><text class="dt" x="1941" y="1024">Velocity</text><use href="#tri" x="2046" y="1017" fill="#ccc"/>
<rect x="2066" y="1004" width="27" height="28" rx="3" class="g"/><path d="M2076 1009h13v18h-13zM2080 1009v18M2084 1009v18" stroke="#d8d6d6" fill="none" stroke-width="1.800"/><path d="M2069 1014v8l4-4z" fill="#d8d6d6"/>
<rect x="2495" y="1004" width="47" height="28" rx="3" class="g"/><rect x="2520" y="1005" width="22" height="26" fill="#1e1b1b"/><path d="M2502 1026l12-13M2505 1012h10v10" fill="none" stroke="#e4e2e2" stroke-width="2.400"/><rect x="2525" y="1012" width="8" height="14" fill="none" stroke="#ccc" stroke-width="1.500"/><circle cx="2534" cy="1019" r="3" fill="#bbb"/>

<!-- editor ruler & grid -->
<rect x="295" y="1084" width="2231" height="27" fill="#6c58e4"/><rect x="295" y="1084" width="2231" height="11" fill="url(#pt)"/><rect x="295" y="1084" width="2231" height="14" fill="url(#pT)"/>
<text class="beat" x="420.500" y="1107.500">18 . 3</text><text class="beat" x="649.500" y="1107.500">18 . 4</text><text class="beat" x="1107.600" y="1107.500">19 . 2</text><text class="beat" x="1336.600" y="1107.500">19 . 3</text><text class="beat" x="1565" y="1107.500">19 . 4</text><text class="beat" x="2023.500" y="1107.500">20 . 2</text><text class="beat" x="2252" y="1107.500">20 . 3</text><text class="beat" x="2481" y="1107.500">20 . 4</text>
<text class="bar" x="885" y="1107.500">19</text><text class="bar" x="1800" y="1107.500">20</text>
<rect x="295" y="1111" width="2231" height="334" fill="#2e2a2a"/>
<path d="M295 1118h2231v9h-2231zM295 1133h2231v10h-2231zM295 1163h2231v9h-2231zM295 1180h2231v9h-2231zM295 1208h2231v10h-2231zM295 1224h2231v9h-2231zM295 1239h2231v9h-2231zM295 1269h2231v9h-2231zM295 1286h2231v9h-2231zM295 1314h2231v9h-2231z" fill="#282424"/>
<path d="M295 1153.500h2231M295 1259.500h2231" stroke="#353131"/><path d="M295 1198.500h2231M295 1304.500h2231" stroke="#4c4a4a" stroke-width="1.300"/>
<rect x="295" y="1111" width="2231" height="334" fill="url(#pe)"/><rect x="295" y="1111" width="2231" height="334" fill="url(#pE)"/>
<rect x="295" y="1325" width="2231" height="3" fill="#6a6868"/>
<!-- keys -->
<rect x="218" y="1111" width="73" height="216" fill="#bcbaba"/>
<path d="M218 1118h41v9h-41zM218 1133h41v10h-41zM218 1163h41v9h-41zM218 1180h41v9h-41zM218 1208h41v10h-41zM218 1224h41v9h-41zM218 1239h41v9h-41zM218 1269h41v9h-41zM218 1286h41v9h-41zM218 1314h41v9h-41z" fill="#151313"/>
<path d="M259 1123h32M259 1138h32M218 1153h73M259 1168h32M259 1184h32M218 1199h73M259 1214h32M259 1229h32M259 1244h32M218 1259h73M259 1274h32M259 1289h32M218 1305h73M259 1319h32" stroke="#4e4c4c" stroke-width="1.200"/>
<rect x="285" y="1169" width="6" height="14" fill="#fff"/>
<text class="r" x="284" y="1197.500" style="font-size:14.500px;fill:#333">C3</text><text class="r" x="284" y="1303" style="font-size:14.500px;fill:#333">C2</text>
<rect x="218.500" y="1327.500" width="73.500" height="31.500" fill="#2c2828" stroke="#5e5c5c"/><text class="b" x="222" y="1340" style="font-size:13.500px;fill:#cfcdcd">Velocity</text>
<!-- notes -->
<g stroke="#1c1418" stroke-width="1">
<rect x="879" y="1208" width="98" height="8" fill="#7a5590"/><rect x="1051" y="1208" width="86.500" height="8" fill="#884f84"/><rect x="1222" y="1208" width="113" height="8" fill="#944a7a"/><rect x="1394" y="1208" width="95.500" height="8" fill="#7a5a98"/><rect x="1565" y="1208" width="100.500" height="8" fill="#5f5aa0"/><rect x="1738" y="1208" width="89.500" height="8" fill="#8a4f82"/><rect x="1909.600" y="1208" width="91" height="8" fill="#944a7a"/><rect x="2081" y="1208" width="95" height="8" fill="#8f4c7f"/><rect x="2253" y="1208" width="71.500" height="8" fill="#8f4c80"/><rect x="2426" y="1208" width="83.500" height="8" fill="#74589a"/></g>
<rect x="878.500" y="1084" width="2.500" height="305" fill="#9a98a4" opacity=".85"/><rect x="883" y="1084" width="2" height="361" fill="#050505"/>
<rect x="879" y="1389" width="2.500" height="56" fill="#8a5ca0"/><rect x="1051" y="1386" width="2.500" height="59" fill="#884f84"/><rect x="1222" y="1383" width="2.500" height="62" fill="#944a7a"/><rect x="1394" y="1396" width="2.500" height="49" fill="#7a5a98"/><rect x="1565" y="1401" width="2.500" height="44" fill="#5f5aa0"/><rect x="1738" y="1388" width="2.500" height="57" fill="#8a4f82"/><rect x="1909.600" y="1383" width="2.500" height="62" fill="#944a7a"/><rect x="2081" y="1389" width="2.500" height="56" fill="#8f4c7f"/><rect x="2253" y="1388" width="2.500" height="57" fill="#8f4c80"/><rect x="2426" y="1396" width="2.500" height="49" fill="#74589a"/>
<!-- editor scrolls -->
<rect x="218" y="1447" width="74" height="12" fill="#4c4a4a"/><path d="M229 1453h10M234 1448v10" stroke="#e4e2e2" stroke-width="2.400"/><path d="M255 1447v12" stroke="#3a3838"/><use href="#tri" x="274" y="1452" fill="#ddd"/>
<rect x="295" y="1447" width="2137" height="12" fill="#4c4a4a"/><rect x="510" y="1449" width="31" height="9" rx="3" fill="#f2f0f0"/><path d="M304 1450l-3 3 3 3M2424 1450l3 3-3 3" fill="none" stroke="#ddd" stroke-width="1.400"/>
<path d="M2440 1453h7M2451 1453h68" stroke="#888" stroke-width="1.500"/><circle cx="2487" cy="1453" r="4.500" fill="#f0f0f0"/><path d="M2520 1453h8M2524 1449v8" stroke="#ddd" stroke-width="1.800"/>
<rect x="2531" y="1084" width="11" height="23" rx="2" class="g"/><use href="#tri" x="2536.500" y="1095" fill="#ddd"/>
<rect x="2531" y="1111" width="11" height="122" rx="2" class="g"/><path d="M2534 1121l2.500-3 2.500 3M2534 1225l2.500 3 2.500-3" fill="none" stroke="#ddd" stroke-width="1.100"/><rect x="2534" y="1162" width="5" height="30" rx="2" fill="#f0f0f0"/>
<rect x="2531" y="1238" width="11" height="80" rx="2" fill="#3c3939"/><path d="M2533.500 1247h6" stroke="#eee" stroke-width="2"/><circle cx="2536.500" cy="1274" r="4" fill="#f0f0f0"/><path d="M2533 1315h7M2536.500 1311.500v7" stroke="#ddd" stroke-width="1.500"/>
<rect x="2531" y="1332" width="11" height="113" rx="2" class="g"/><rect x="2534" y="1347" width="5" height="57" rx="2" fill="#f0f0f0"/><path d="M2534 1340l2.500-3 2.500 3M2534 1436l2.500 3 2.500-3" fill="none" stroke="#ddd" stroke-width="1.100"/>

<!-- lower tabs -->
<rect x="0" y="1470" width="2560" height="25" fill="#050505"/>
<path d="M5 1469v16q0 5 5 5h72v-22" fill="#2c2828" stroke="#5c5a5a" stroke-width="1.600"/><rect x="6" y="1466" width="75" height="4" fill="#2c2828"/>
<path d="M347 1469v21h105v-21" fill="#2c2828" stroke="#5c5a5a" stroke-width="1.600"/><rect x="348" y="1466" width="103" height="4" fill="#2c2828"/>
<text class="c tab" x="42.500" y="1486.500">Track</text><text class="c tab" x="122" y="1486.500">Editor</text><path d="M214 1476l10 10M224 1476l-10 10" stroke="#d4d2d2" stroke-width="2.400"/><text class="c tab" x="288.500" y="1486.500">MixConsole</text><text class="c tab" x="388" y="1486.500">Editor</text><path d="M435 1478h11l-5.500 6z" fill="#8a8888"/><text class="tab" x="473" y="1486.500">Drum Machine</text><text class="tab" x="609" y="1486.500">Sampler Control</text><text class="tab" x="754" y="1486.500">Chord Pads</text><text class="tab" x="869" y="1486.500">MIDI Remote</text><text class="tab" x="995" y="1486.500">Modulators</text>

<!-- transport -->
<rect y="1495" width="2560" height="45" fill="#2c2828"/><rect y="1540" width="2560" height="5" fill="#12252a"/>
<rect x="4.500" y="1503" width="27.500" height="28" rx="3" fill="#514f4f"/><circle cx="18" cy="1517" r="7.500" fill="none" stroke="#d4d2d2" stroke-width="2.400"/><circle cx="18" cy="1517" r="3" fill="none" stroke="#d4d2d2" stroke-width="2"/>
<rect x="38" y="1503.500" width="47" height="27.500" rx="3" class="dd"/><circle cx="52" cy="1517" r="6" fill="#e0dede"/><use href="#tri" x="72" y="1517" fill="#ddd"/><path d="M89 1510v3M89 1516v3M89 1522v3" stroke="#ccc" stroke-width="2.400"/>
<rect x="98" y="1503.500" width="48" height="27.500" rx="3" class="dd"/><path d="M104 1517h3M107 1514v6M110 1509v16M113 1512v10M116 1507v20M119 1512v10M122 1515v4" stroke="#e0dede" stroke-width="1.800"/><use href="#tri" x="133" y="1517" fill="#ddd"/><path d="M149 1510v3M149 1516v3M149 1522v3" stroke="#ccc" stroke-width="2.400"/>
<rect x="158" y="1503.500" width="48" height="27.500" rx="3" class="dd"/><circle cx="171.500" cy="1517" r="8" fill="#e0dede"/><use href="#tri" x="193" y="1517" fill="#ddd"/><path d="M210 1510v3M210 1516v3M210 1522v3" stroke="#ccc" stroke-width="2.400"/>
<rect x="219" y="1503.500" width="41" height="28" rx="3" fill="#f09a38"/><text class="c" x="240" y="1523" style="font-size:16.500px;fill:#4a2c0a">AQ</text>

<rect x="864.500" y="1503.500" width="165" height="27" rx="3" class="dd"/><rect x="864.500" y="1503.500" width="27" height="27" rx="3" fill="#4c4a4a"/><path d="M875 1510h6l-3 3v11h-4z" fill="#d8d6d6"/><text class="r tr" x="1022" y="1523">1.   1.   1.   0</text>
<rect x="1040" y="1503.500" width="166" height="27" rx="3" class="dd"/><rect x="1040" y="1503.500" width="27" height="27" rx="3" fill="#4c4a4a"/><path d="M1056 1510h-6l3 3v11h-4z" fill="#d8d6d6"/><text class="r tr" x="1198" y="1523">25.   1.   1.   0</text>
<rect x="1212" y="1500.500" width="301" height="34.500" rx="3" fill="#6e6c6c" stroke="#c0bebe" stroke-width="1.500"/>
<rect x="1295" y="1501.500" width="54" height="33" fill="#8a7fe8"/><rect x="1405" y="1501.500" width="55" height="33" fill="#3ad63a"/>
<path d="M1233 1511v13M1244 1511v13l-8-6.500z" fill="none" stroke="#e8e6e6" stroke-width="1.800"/><path d="M1270 1511v13l8-6.500zM1281 1511v13" fill="none" stroke="#e8e6e6" stroke-width="1.800"/>
<path d="M1326 1510l3 1c0 4-2 10-4 11h-9c3-4 2-1 5-4M1317 1521h10" fill="none" stroke="#221c50" stroke-width="2.200"/>
<rect x="1372" y="1511" width="11" height="14" fill="none" stroke="#e8e6e6" stroke-width="2"/>
<path d="M1427 1510v16l10-8z" fill="none" stroke="#0f4a0f" stroke-width="2"/>
<circle cx="1487" cy="1518" r="6.500" fill="none" stroke="#e8e6e6" stroke-width="2"/>
<path d="M1517 1510v3M1517 1516v3M1517 1522v3" stroke="#ccc" stroke-width="2.400"/>
<rect x="1526" y="1503.500" width="41" height="27.500" rx="3" class="g"/><path d="M1550 1509a9 9 0 0 1 0 17" fill="none" stroke="#e4e2e2" stroke-width="3"/><circle cx="1545" cy="1517" r="3" fill="#e4e2e2"/>
<rect x="1574" y="1503.500" width="163" height="27" rx="3" class="dd"/><path d="M1589 1510v13" stroke="#ddd" stroke-width="1.800"/><ellipse cx="1586" cy="1523" rx="3.500" ry="2.500" fill="#ddd"/><path d="M1600 1504v26" stroke="#4e4c4c"/><text class="r tr" x="1731" y="1523">19.   1.   1.  10</text>
<path d="M1741 1510v3M1741 1516v3M1741 1522v3" stroke="#ccc" stroke-width="2.400"/>
<rect x="1750" y="1503.500" width="199" height="27" rx="3" class="dd"/><rect x="1750" y="1503.500" width="28" height="27" rx="3" fill="#e0dede"/><path d="M1764 1508v18M1760 1512l4-4 4 4M1760 1522l4 4 4-4M1759 1517h10" fill="none" stroke="#222" stroke-width="1.800"/>
<text class="r tr" x="1840" y="1523" style="letter-spacing:0">80.000</text><path d="M1851 1514l4-5 4 5zM1851 1520l4 5 4-5z" fill="#ccc"/>
<rect x="1867.500" y="1504" width="55" height="26" fill="#5a5858"/><text class="c tr" x="1896" y="1523" style="font-size:14.500px;letter-spacing:0">Tap</text><use href="#tri" x="1936" y="1517" fill="#ddd"/><path d="M1953 1510v3M1953 1516v3M1953 1522v3" stroke="#ccc" stroke-width="2.400"/>
</svg>
</body></html>
